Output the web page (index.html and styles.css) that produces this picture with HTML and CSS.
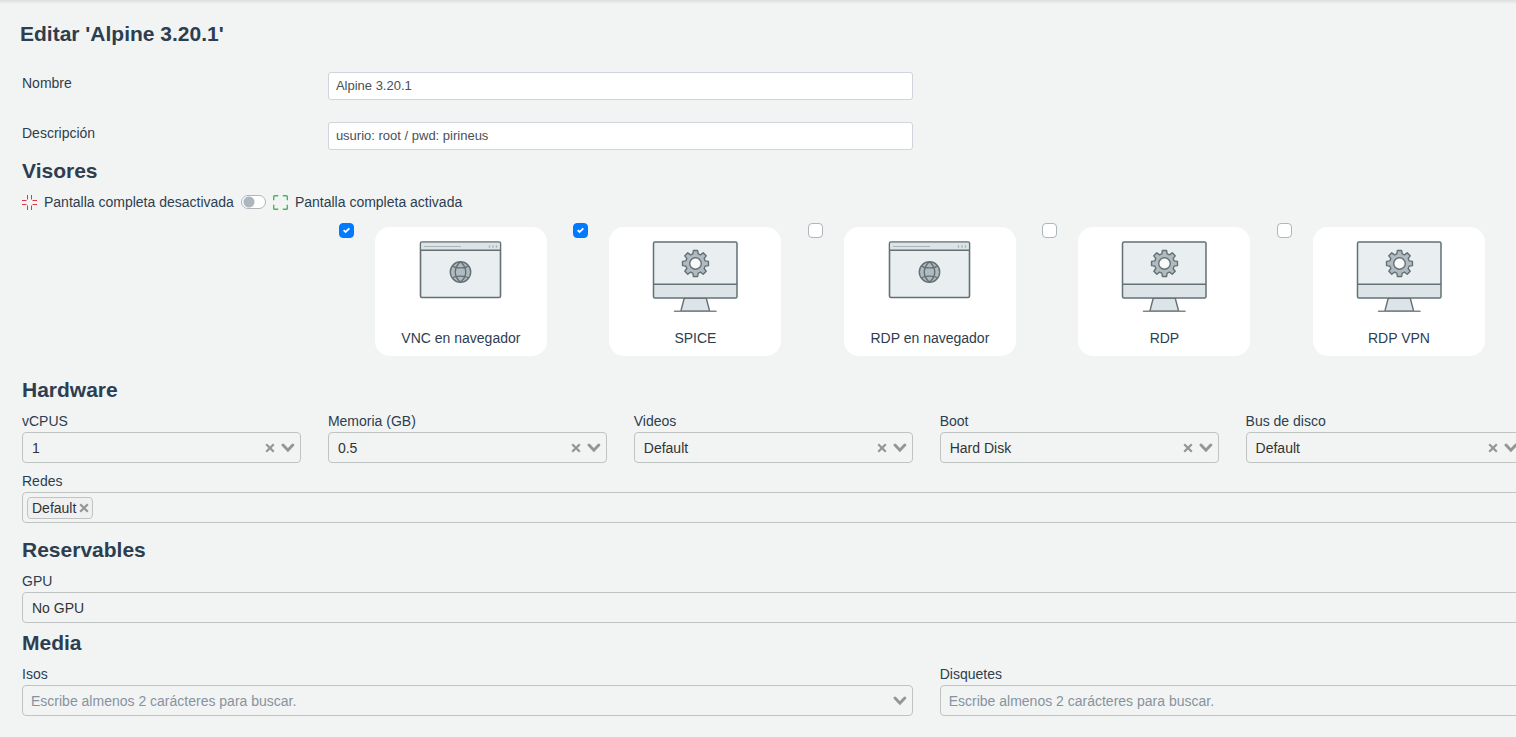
FILE: index.html
```html
<!DOCTYPE html>
<html lang="es">
<head>
<meta charset="utf-8">
<title>Editar 'Alpine 3.20.1'</title>
<link rel="stylesheet" href="styles.css">
</head>
<body>
<svg class="defs" aria-hidden="true">
  <symbol id="window" viewBox="0 0 86 72">
    <rect x="2.500" y="1" width="80" height="55.5" rx="1.5" fill="#e9eef1" stroke="#647074" stroke-width="1.6"/>
    <path d="M3.300 1.8h78.4V9H3.300z" fill="#dde4e7"/>
    <path d="M2.500 9.300h80" stroke="#647074" stroke-width="1.4"/>
    <path d="M6.500 5.500h36" stroke="#aab4b9" stroke-width="1.2" stroke-linecap="round"/>
    <path d="M71.500 4.200v2.600M75 4.200v2.600M78.500 4.200v2.600" stroke="#aab4b9" stroke-width="1.400"/>
    <g fill="#b0bbc0" stroke="#647074" stroke-width="1.400">
      <circle cx="42.500" cy="31" r="10.200"/>
      <path d="M42.500 20.800c-7 6-7 14.400 0 20.400c7-6 7-14.400 0-20.400z"/>
      <path fill="none" d="M34.800 24.500c1.200 3.200 14.200 3.200 15.400 0M34.800 37.500c1.200-3.200 14.200-3.200 15.400 0"/>
    </g>
  </symbol>
  <symbol id="monitor" viewBox="0 0 86 72">
    <path d="M32.300 57h21.900l3.500 13.200H28.800z" fill="#dde4e7" stroke="#647074" stroke-width="1.400"/>
    <path d="M22.500 70.200h41.500" stroke="#7d888c" stroke-width="1.600" stroke-linecap="round"/>
    <rect x="1.500" y="1" width="83.500" height="56" rx="1.500" fill="#e9eef1"/>
    <path d="M1.500 43.300H85V56H1.500z" fill="#dde4e7"/>
    <rect x="1.500" y="1" width="83.500" height="56" rx="1.500" fill="none" stroke="#647074" stroke-width="1.500"/>
    <path d="M1.500 43.300H85" stroke="#647074" stroke-width="1.500"/>
    <g transform="translate(43.500 21.500) scale(.92)">
      <path fill="#b0bbc0" stroke="#647074" stroke-width="1.500" stroke-linejoin="round" d="M-2.300-13h4.600l.6 3.700 2.500 1 3-2.200 3.200 3.200-2.200 3 1 2.500 3.700.6v4.600l-3.700.6-1 2.500 2.200 3-3.200 3.200-3-2.200-2.500 1-.6 3.700h-4.600l-.6-3.700-2.500-1-3 2.200-3.200-3.200 2.200-3-1-2.500-3.700-.6v-4.600l3.700-.6 1-2.500-2.200-3 3.200-3.200 3 2.200 2.500-1z"/>
      <circle r="6.300" cy="1.100" fill="#f8f9fa" stroke="#647074" stroke-width="1.500"/>
    </g>
  </symbol>
  <symbol id="cross" viewBox="0 0 10 10"><path d="M1.200 1.200l7.600 7.600M8.800 1.200l-7.600 7.600" stroke="currentColor" stroke-width="2.200" fill="none"/></symbol>
  <symbol id="chevron" viewBox="0 0 14 10"><path d="M2 2l4.900 5.200L11.800 2" stroke="currentColor" stroke-width="2.900" stroke-linecap="round" fill="none"/></symbol>
</svg>

<main class="page">
  <h1 class="title">Editar 'Alpine 3.20.1'</h1>
  <form class="form">
    <div class="grid text-row">
      <label for="name">Nombre</label>
      <input class="text-input" id="name" type="text" value="Alpine 3.20.1">
    </div>
    <div class="grid text-row">
      <label for="desc">Descripción</label>
      <input class="text-input" id="desc" type="text" value="usurio: root / pwd: pirineus">
    </div>

    <h2 class="heading">Visores</h2>
    <div class="fullscreen">
      <svg class="screen-icon off" viewBox="0 0 15 15" aria-hidden="true"><path d="M5.500 0v4.500M0 5.500h4.500M9.500 0v4.500M10.500 5.500H15M0 9.500h4.500M5.500 10.500V15M10.500 9.500H15M9.500 10.500V15"/></svg>
      <label for="full">Pantalla completa desactivada</label>
      <input class="switch" id="full" type="checkbox" role="switch">
      <svg class="screen-icon on" viewBox="0 0 15 15" aria-hidden="true"><path d="M.7 5.200V1.500Q.7.700 1.500.7h3.700M9.800.7h3.700q.8 0 .8.800v3.700M14.300 9.800v3.700q0 .8-.8.800H9.800M5.200 14.300H1.500q-.8 0-.8-.8V9.800"/></svg>
      <label for="full">Pantalla completa activada</label>
    </div>
    <div class="grid">
      <div class="viewers">
        <div class="viewer"><input class="check" id="v1" type="checkbox" checked><label class="card" for="v1"><svg class="pic"><use href="#window"/></svg>VNC en navegador</label></div>
        <div class="viewer"><input class="check" id="v2" type="checkbox" checked><label class="card" for="v2"><svg class="pic"><use href="#monitor"/></svg>SPICE</label></div>
        <div class="viewer"><input class="check" id="v3" type="checkbox"><label class="card" for="v3"><svg class="pic"><use href="#window"/></svg>RDP en navegador</label></div>
        <div class="viewer"><input class="check" id="v4" type="checkbox"><label class="card" for="v4"><svg class="pic"><use href="#monitor"/></svg>RDP</label></div>
        <div class="viewer"><input class="check" id="v5" type="checkbox"><label class="card" for="v5"><svg class="pic"><use href="#monitor"/></svg>RDP VPN</label></div>
      </div>
    </div>

    <h2 class="heading spaced">Hardware</h2>
    <div class="grid">
      <div class="field">
        <label for="cpu">vCPUS</label>
        <div class="control"><select id="cpu"><option>1</option></select>
          <button class="clear" type="button" aria-label="Quitar"><svg><use href="#cross"/></svg></button><svg class="arrow"><use href="#chevron"/></svg></div>
      </div>
      <div class="field">
        <label for="mem">Memoria (GB)</label>
        <div class="control"><select id="mem"><option>0.5</option></select>
          <button class="clear" type="button" aria-label="Quitar"><svg><use href="#cross"/></svg></button><svg class="arrow"><use href="#chevron"/></svg></div>
      </div>
      <div class="field">
        <label for="video">Videos</label>
        <div class="control"><select id="video"><option>Default</option></select>
          <button class="clear" type="button" aria-label="Quitar"><svg><use href="#cross"/></svg></button><svg class="arrow"><use href="#chevron"/></svg></div>
      </div>
      <div class="field">
        <label for="boot">Boot</label>
        <div class="control"><select id="boot"><option>Hard Disk</option></select>
          <button class="clear" type="button" aria-label="Quitar"><svg><use href="#cross"/></svg></button><svg class="arrow"><use href="#chevron"/></svg></div>
      </div>
      <div class="field">
        <label for="bus">Bus de disco</label>
        <div class="control"><select id="bus"><option>Default</option></select>
          <button class="clear" type="button" aria-label="Quitar"><svg><use href="#cross"/></svg></button><svg class="arrow"><use href="#chevron"/></svg></div>
      </div>
      <div class="field full">
        <label for="nets">Redes</label>
        <div class="control tags">
          <span class="tag">Default<button class="remove" type="button" aria-label="Quitar Default"><svg><use href="#cross"/></svg></button></span>
          <input class="search" id="nets" type="text">
        </div>
      </div>
    </div>

    <h2 class="heading middle">Reservables</h2>
    <div class="grid">
      <div class="field full">
        <label for="gpu">GPU</label>
        <div class="control"><select id="gpu"><option>No GPU</option></select></div>
      </div>
    </div>

    <h2 class="heading">Media</h2>
    <div class="grid">
      <div class="field half">
        <label for="isos">Isos</label>
        <div class="control"><input class="search" id="isos" type="text" placeholder="Escribe almenos 2 carácteres para buscar."><svg class="arrow"><use href="#chevron"/></svg></div>
      </div>
      <div class="field half">
        <label for="floppy">Disquetes</label>
        <div class="control"><input class="search" id="floppy" type="text" placeholder="Escribe almenos 2 carácteres para buscar."><svg class="arrow"><use href="#chevron"/></svg></div>
      </div>
    </div>
  </form>
</main>
</body>
</html>
```
FILE: styles.css
```css
* { box-sizing: border-box; }

body {
  margin: 0;
  overflow: hidden;
  background: #f2f4f3;
  color: #2c3e50;
  font: 14px/22px "Liberation Sans", Arial, sans-serif;
}

.defs { display: none; }

.page {
  padding: 20px;
  background: linear-gradient(#dddfde, #f2f4f3 4px);
}

.title {
  margin: 0 0 24px;
  font-size: 21px;
  line-height: 28px;
}

/* The form is wider than the viewport and is clipped at the right. */
.form {
  width: calc(121vw - 26px);
  margin-left: 2px;
}

.grid {
  display: grid;
  grid-template-columns: repeat(6, 1fr);
  gap: 7px 27px;
}

.text-row { margin-bottom: 22px; }
.text-row + .heading { margin-top: -14px; }

.text-input {
  grid-column: span 2;
  height: 28px;
  padding: 0 7px 2px;
  border: 1px solid #ced4da;
  border-radius: 3px;
  background: #fff;
  color: #495057;
  font: inherit;
  font-size: 13px;
}

.heading {
  margin: 7px 0;
  font-size: 21px;
  line-height: 26px;
}
.heading.spaced { margin-top: 21px; }
.heading.middle { margin-top: 14px; }

.fullscreen {
  display: flex;
  align-items: center;
  gap: 7px;
  margin-bottom: 10px;
}
.screen-icon { width: 15px; height: 15px; fill: none; }
.off { stroke: #dc3545; stroke-width: 1; }
.on { stroke: #45b562; stroke-width: 1.4; }

.switch, .check {
  appearance: none;
  flex: none;
  margin: 0;
  border: 1px solid #adb5bd;
  background: #fff no-repeat center;
}
.switch {
  width: 25px;
  height: 14px;
  border-radius: 7px;
  background: radial-gradient(circle at 7px 6px, #adb5bd 5px, #fff 6px);
}
.check { width: 15px; height: 15px; border-radius: 4px; }
.check:checked {
  border-color: #007bff;
  background-color: #007bff;
  background-image: url("data:image/svg+xml,%3Csvg xmlns='http://www.w3.org/2000/svg' width='7' height='7' viewBox='0 0 8 8'%3E%3Cpath fill='%23fff' d='M6.564.75l-3.590 3.612-1.538-1.550L0 4.260l2.974 2.990L8 2.193z'/%3E%3C/svg%3E");
}

.viewers {
  grid-column: 2 / span 4;
  display: grid;
  grid-template-columns: repeat(5, 1fr);
  padding: 0 13px 0 11px;
}
.viewer { display: flex; gap: 21px; }
.card {
  display: flex;
  flex-direction: column;
  align-items: center;
  gap: 14px;
  width: 172px;
  margin-top: 4px;
  padding: 14px 0 7px;
  border-radius: 15px;
  background: #fff;
}
.pic { width: 86px; height: 72px; }

.field { display: flex; flex-direction: column; }
.full { grid-column: 1 / -1; }
.half { grid-column: span 3; }

.control {
  position: relative;
  display: flex;
  align-items: center;
  height: 31px;
  border: 1px solid #bfc3c2;
  border-radius: 4px;
  color: #949694;
}
.control select, .search {
  flex: 1;
  min-width: 0;
  height: 100%;
  padding: 0 9px;
  border: 0;
  appearance: none;
  background: none;
  color: #333;
  font: inherit;
}
.search { padding: 0 8px; }
.search::placeholder { color: #8792a0; opacity: 1; }

.clear, .remove {
  display: flex;
  padding: 0;
  border: 0;
  background: none;
  color: inherit;
}
.clear svg, .remove svg { width: 10px; height: 10px; }
.clear { position: absolute; right: 25px; }
.arrow {
  position: absolute;
  right: 5px;
  width: 14px;
  height: 10px;
}

.tags { padding-left: 4px; }
.tag {
  display: flex;
  align-items: center;
  gap: 3px;
  padding: 0 3px 0 4px;
  border: 1px solid #c1c3c2;
  border-radius: 4px;
  background: #f0f0f0;
  color: #333;
  line-height: 20px;
}
.remove { color: #949694; }
```
